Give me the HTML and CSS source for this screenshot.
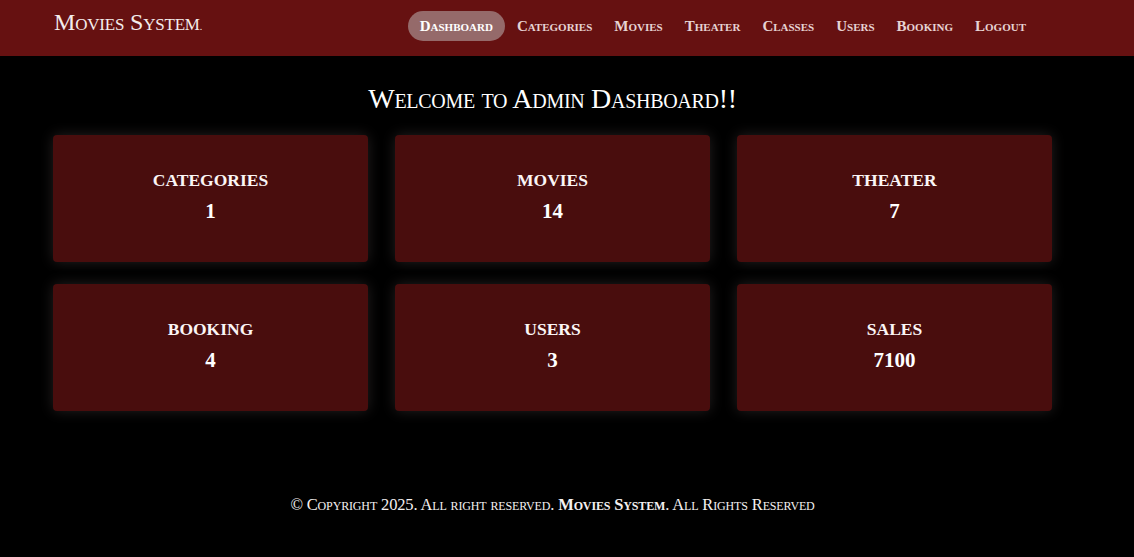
FILE: index.html
```html
<!DOCTYPE html>
<html>
<head>
<meta charset="utf-8">
<link rel="stylesheet" href="styles.css">
</head>
<body>
<header class="navbar">
  <div class="nav-inner">
    <a class="brand">Movies System<span class="dot">.</span></a>
    <nav class="menu">
      <a class="link active">Dashboard</a>
      <a class="link">Categories</a>
      <a class="link">Movies</a>
      <a class="link">Theater</a>
      <a class="link">Classes</a>
      <a class="link">Users</a>
      <a class="link">Booking</a>
      <a class="link">Logout</a>
    </nav>
  </div>
</header>
<main class="content">
  <h1 class="title">Welcome to Admin Dashboard!!</h1>
  <div class="grid">
    <div class="card"><h3>CATEGORIES</h3><p>1</p></div>
    <div class="card"><h3>MOVIES</h3><p>14</p></div>
    <div class="card"><h3>THEATER</h3><p>7</p></div>
    <div class="card"><h3>BOOKING</h3><p>4</p></div>
    <div class="card"><h3>USERS</h3><p>3</p></div>
    <div class="card"><h3>SALES</h3><p>7100</p></div>
  </div>
</main>
<footer class="footer">
  <p>© Copyright 2025. All right reserved. <b>Movies System</b>. All Rights Reserved</p>
</footer>
</body>
</html>
```

FILE: styles.css
```css
* { box-sizing: border-box; }
html, body { margin: 0; padding: 0; }
body {
  background: #000;
  color: #fff;
  font-family: "Liberation Serif", "Times New Roman", serif;
  min-height: 557px;
}
.navbar {
  background: #661111;
  height: 56px;
}
.nav-inner {
  width: 999px;
  margin-left: 53px;
  height: 56px;
  display: flex;
  align-items: center;
  justify-content: space-between;
}
.brand {
  font-variant: small-caps;
  font-size: 24px;
  letter-spacing: -0.2px;
  color: #f4ecec;
  margin-top: -12px;
  padding-left: 1px;
}
.brand .dot { font-size: 10px; }
.menu {
  display: flex;
  align-items: center;
  gap: 0;
  margin-right: 15px;
  margin-top: -4px;
}
.link {
  font-variant: small-caps;
  font-weight: bold;
  font-size: 15px;
  color: #e6d3d3;
  padding: 0 11px;
  height: 30px;
  line-height: 30px;
  border-radius: 15px;
}
.link.active {
  background: #956a6a;
  color: #fff;
  padding: 0 12px;
  margin-right: 1px;
}
.content {
  width: 999px;
  margin-left: 53px;
}
.title {
  text-align: center;
  font-variant: small-caps;
  font-weight: normal;
  font-size: 28px;
  letter-spacing: -0.3px;
  margin: 28px 0 0;
  height: 51px;
  line-height: 30px;
}
.grid {
  display: grid;
  grid-template-columns: repeat(3, 315px);
  column-gap: 27px;
  row-gap: 22px;
}
.card {
  background: #490d0d;
  height: 127px;
  border-radius: 4px;
  box-shadow: 0 0 14px rgba(80, 70, 70, 0.45);
  text-align: center;
  padding-top: 34px;
}
.card h3 {
  margin: 0;
  font-size: 17.5px;
  font-weight: bold;
  line-height: 22px;
  color: #fbf5f5;
}
.card p {
  margin: 8px 0 0;
  font-size: 21px;
  font-weight: bold;
  line-height: 24px;
}
.footer {
  width: 999px;
  margin-left: 53px;
  text-align: center;
  margin-top: 84px;
}
.footer p {
  margin: 0;
  font-variant: small-caps;
  font-size: 16.5px;
  letter-spacing: -0.15px;
  color: #f4f0f0;
}
```
